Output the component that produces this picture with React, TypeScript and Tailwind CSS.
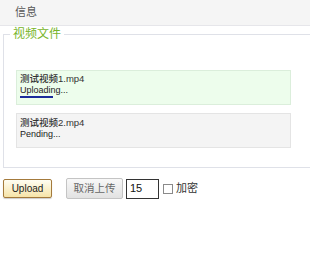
import React from 'react';

interface UploadItem {
  name: string;
  status: string;
  progress?: number;
  active?: boolean;
}

const items: UploadItem[] = [
  { name: '测试视频1.mp4', status: 'Uploading...', progress: 33, active: true },
  { name: '测试视频2.mp4', status: 'Pending...' },
];

const font = "font-['Liberation_Sans','Noto_Sans_CJK_SC',sans-serif]";

const FileRow: React.FC<{ item: UploadItem }> = ({ item }) => (
  <div
    className={`w-[275px] h-[35px] border pl-[3px] ${
      item.active
        ? 'bg-[#edfdec] border-[#dbeedb] pt-[2px]'
        : 'bg-[#f4f4f4] border-[#e4e4e4] pt-[3px]'
    }`}
  >
    <div className="text-[9.5px] leading-[12px] text-[#333] font-medium">{item.name}</div>
    <div className="text-[9px] leading-[11px] text-[#222]">{item.status}</div>
    {item.progress !== undefined && (
      <div className="h-[2px] bg-[#1b2a9c]" style={{ width: item.progress }} />
    )}
  </div>
);

const App: React.FC = () => {
  return (
    <div className={`w-[310px] h-[256px] overflow-hidden bg-white ${font}`}>
      <div className="h-[26px] bg-[#f5f5f5] border-b border-[#e6e6ea] pl-[15px] flex items-center text-[11px] text-[#555]">
        信息
      </div>
      <fieldset className="mt-[1px] ml-[3px] w-[330px] border border-[#dfe1e8] pt-[28px] pb-[19px]">
        <legend className="ml-[6px] px-[3px] text-[12px] leading-[15px] text-[#77b52a]">视频文件</legend>
        <div className="pl-[12px] flex flex-col gap-[8px]">
          {items.map((item) => (
            <FileRow key={item.name} item={item} />
          ))}
        </div>
      </fieldset>
      <div className="mt-[10px] pl-[3px] flex items-center">
        <button className="w-[49px] h-[19px] rounded-[2px] border border-[#a47a3c] bg-gradient-to-b from-[#fffdf2] to-[#f6e4a8] text-[10px] text-[#222] shadow-[0_1px_1px_rgba(0,0,0,0.2)]">
          Upload
        </button>
        <button className="ml-[14px] w-[57px] h-[21px] rounded-[2px] border border-[#c4c4c4] bg-gradient-to-b from-[#f8f8f8] to-[#e2e2e2] text-[10.5px] text-[#666]">
          取消上传
        </button>
        <div className="ml-[3px] w-[33px] h-[20px] border border-[#333] flex items-center pl-[3px] text-[11px] text-[#111]">
          15
        </div>
        <span className="ml-[4px] w-[10px] h-[10px] border border-[#8a8a8a] bg-white" />
        <span className="ml-[3px] text-[11px] text-[#333]">加密</span>
      </div>
    </div>
  );
};

export default App;
